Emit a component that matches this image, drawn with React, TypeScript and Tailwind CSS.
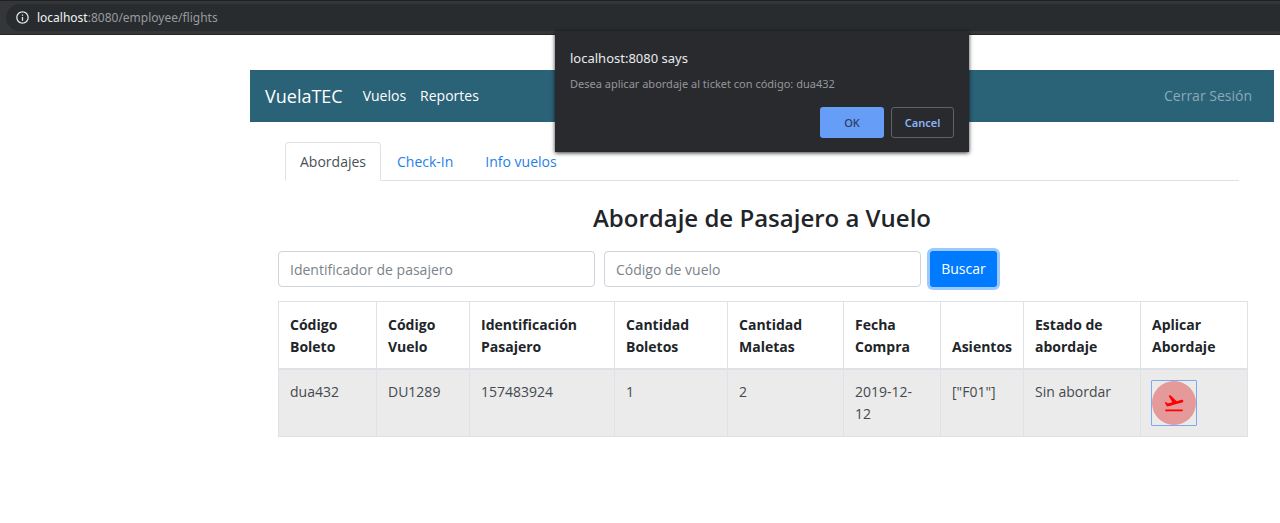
import { Fragment } from "react";
import { MdFlightTakeoff, MdInfoOutline } from "react-icons/md";

const columns = [
  { width: "w-[98px]", lines: ["Código", "Boleto"] },
  { width: "w-[93px]", lines: ["Código", "Vuelo"] },
  { width: "w-[145px]", lines: ["Identificación", "Pasajero"] },
  { width: "w-[113px]", lines: ["Cantidad", "Boletos"] },
  { width: "w-[116px]", lines: ["Cantidad", "Maletas"] },
  { width: "w-[97px]", lines: ["Fecha", "Compra"] },
  { width: "w-[83px]", lines: ["Asientos"] },
  { width: "w-[117px]", lines: ["Estado de", "abordaje"] },
  { width: "w-[107px]", lines: ["Aplicar", "Abordaje"] },
];

const ticket = [
  ["dua432"],
  ["DU1289"],
  ["157483924"],
  ["1"],
  ["2"],
  ["2019-12-", "12"],
  ['["F01"]'],
  ["Sin abordar"],
];

function Lines({ lines }: { lines: string[] }) {
  return lines.map((line, i) => (
    <Fragment key={line}>
      {i > 0 && <br />}
      {line}
    </Fragment>
  ));
}

function AddressBar() {
  return (
    <header className="h-[35px] border-t border-b border-t-[#202124] border-b-[#242628] bg-[#35363a] py-[3px] pl-[6px]">
      <div className="flex h-full items-center gap-[7px] rounded-l-full bg-[#292c2f] pl-[9px] font-['Noto_Sans',sans-serif] text-xs">
        <MdInfoOutline className="size-[15px] text-[#e8eaed]" />
        <span className="text-[#989b9e]">
          <span className="text-[#f1f3f4]">localhost</span>:8080/employee/flights
        </span>
      </div>
    </header>
  );
}

function ConfirmDialog() {
  return (
    <div
      role="dialog"
      aria-labelledby="dialog-title"
      className="absolute -top-1 left-1/2 w-[414px] -translate-x-1/2 bg-[#292a2d] px-[15px] pt-4 pb-[14px] font-['Noto_Sans',sans-serif] shadow-[0_1px_4px_rgba(0,0,0,0.8)]"
    >
      <h2 id="dialog-title" className="text-[13px] leading-[22px] text-[#e8eaed]">
        localhost:8080 says
      </h2>
      <p className="mt-1 text-[11px] leading-[22px] text-[#94979b]">
        Desea aplicar abordaje al ticket con código: dua432
      </p>
      <div className="mt-3 flex justify-end gap-[7px] text-[11px]">
        <button className="h-[31px] w-16 rounded-[3px] bg-[#669df6] font-medium text-[#2c3e60]">OK</button>
        <button className="h-[31px] w-[63px] rounded-[3px] border border-[#5f6368] font-semibold text-[#8ab4f8]">
          Cancel
        </button>
      </div>
    </div>
  );
}

function Navbar() {
  return (
    <nav className="flex h-[52px] items-center bg-[#2a6278] px-[15px] text-white">
      <a href="#inicio" className="text-lg">VuelaTEC</a>
      <a href="#vuelos" className="ml-5">Vuelos</a>
      <a href="#reportes" className="ml-[14px]">Reportes</a>
      <a href="#salir" className="mr-[7px] ml-auto text-[#8aaab6]">Cerrar Sesión</a>
    </nav>
  );
}

export default function App() {
  return (
    <div className="min-h-screen bg-white font-['Open_Sans','Noto_Sans',sans-serif] text-[#212529]">
      <AddressBar />
      <main className="relative ml-[250px] mr-[6px] pt-[35px] text-[14px] leading-[22px]">
        <Navbar />
        <div className="px-[28px] pt-5">
          <div className="mx-[7px] flex border-b border-[#dee2e6]">
            <a
              href="#abordajes"
              className="-mb-px rounded-t border border-[#dee2e6] border-b-white bg-white px-[14px] pt-2 pb-[7px] text-[#495057]"
            >
              Abordajes
            </a>
            <a href="#check-in" className="px-4 pt-[9px] pb-[7px] text-[#1f7fe8]">Check-In</a>
            <a href="#info" className="px-4 pt-[9px] pb-[7px] text-[#1f7fe8]">Info vuelos</a>
          </div>
          <h1 className="mt-5 text-center text-[24px] leading-[34px] font-semibold">
            Abordaje de Pasajero a Vuelo
          </h1>
          <form className="mt-4 flex gap-[9px]">
            <input
              aria-label="Identificador de pasajero"
              placeholder="Identificador de pasajero"
              className="h-9 min-w-0 flex-1 rounded border border-[#ced4da] px-[11px] placeholder:text-[#7b838a]"
            />
            <input
              aria-label="Código de vuelo"
              placeholder="Código de vuelo"
              className="h-9 min-w-0 flex-1 rounded border border-[#ced4da] px-[11px] placeholder:text-[#7b838a]"
            />
            <div className="w-[316px]">
              <button
                type="button"
                className="h-9 w-[67px] rounded-[3px] bg-[#007bff] text-white ring-3 ring-[#99caff]"
              >
                Buscar
              </button>
            </div>
          </form>
          <table className="mt-[14px] w-full table-fixed border-collapse text-left">
            <thead>
              <tr>
                {columns.map(({ width, lines }) => (
                  <th
                    key={lines.join(" ")}
                    className={`${width} border border-b-2 border-[#dee2e6] px-[11px] pt-3 pb-[10px] align-bottom font-bold`}
                  >
                    <Lines lines={lines} />
                  </th>
                ))}
              </tr>
            </thead>
            <tbody className="bg-[#ebebeb] text-[#45494d]">
              <tr>
                {ticket.map((lines, i) => (
                  <td key={i} className="border border-[#dee2e6] px-[11px] py-[11px] align-top">
                    <Lines lines={lines} />
                  </td>
                ))}
                <td className="border border-[#dee2e6] px-[10px] py-[10px] align-top">
                  <button
                    aria-label="Aplicar abordaje"
                    className="block rounded-[1px] border border-[#7ea9f0]"
                  >
                    <span className="flex size-11 items-center justify-center rounded-full bg-[#e59999]">
                      <MdFlightTakeoff className="size-[22px] text-[#ff0000]" />
                    </span>
                  </button>
                </td>
              </tr>
            </tbody>
          </table>
        </div>
        <ConfirmDialog />
      </main>
    </div>
  );
}
